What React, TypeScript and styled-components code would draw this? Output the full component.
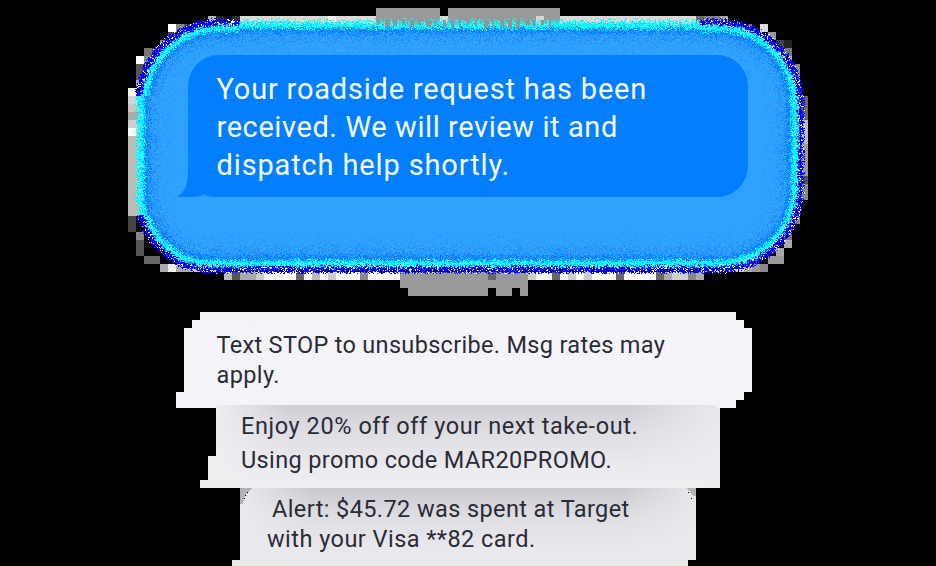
import React from "react";
import styled, { createGlobalStyle } from "styled-components";

const GlobalStyle = createGlobalStyle`
  html, body { margin: 0; background: #000; overflow: hidden; }
`;

const Stage = styled.main`
  position: relative;
  width: 936px;
  height: 566px;
  overflow: hidden;
  background: #000;
  font-family: Roboto, "Open Sans", sans-serif;
`;

const GlowArt = styled.svg`
  position: absolute;
  inset: 0;
  display: block;
`;

const Thread = styled.section`
  position: relative;
  display: flex;
  flex-direction: column;
  padding-top: 55px;
`;

const PrimaryBubble = styled.article`
  position: relative;
  box-sizing: border-box;
  width: 560px;
  height: 142px;
  margin-left: 188px;
  padding: 15px 29px 0 28.5px;
  border-radius: 31px 31px 31px 14px;
  background: #027eff;
  color: #f5fbff;
`;

const Tail = styled.svg`
  position: absolute;
  left: -11px;
  bottom: 0;
`;

const CornerArt = styled.svg<{ $x: number }>`
  position: absolute;
  top: 0;
  left: ${(p) => p.$x}px;
`;

const Card = styled.article<{ $left: number; $w: number; $h: number; $top: number; $pad: string; $fill: string; $clip: string }>`
  position: relative;
  box-sizing: border-box;
  flex: none;
  width: ${(p) => p.$w}px;
  height: ${(p) => p.$h}px;
  margin: ${(p) => p.$top}px 0 0 ${(p) => p.$left}px;
  padding: ${(p) => p.$pad};
  background: ${(p) => p.$fill};
  clip-path: polygon(${(p) => p.$clip});
  color: #2b2b37;
`;

const Line = styled.div<{ $size: number; $lh: number; $ls?: number; $indent?: number }>`
  position: relative;
  font-size: ${(p) => p.$size}px;
  line-height: ${(p) => p.$lh}px;
  letter-spacing: ${(p) => p.$ls ?? 0}px;
  padding-left: ${(p) => p.$indent ?? 0}px;
  white-space: nowrap;
`;

function makeRandom(seed: number) {
  let s = seed;
  return () => {
    s = (s + 0x6d2b79f5) | 0;
    let t = Math.imul(s ^ (s >>> 15), 1 | s);
    t = (t + Math.imul(t ^ (t >>> 7), 61 | t)) ^ t;
    return ((t ^ (t >>> 14)) >>> 0) / 4294967296;
  };
}

const BOX = { l: 136, r: 803, t: 20, b: 272 };

/* Distance inwards from the edge of the glow; negative outside it. */
function depth(x: number, y: number) {
  const left = x < 469;
  const top = y < 146;
  const rad = left && !top ? 75 : 84;
  const dx = left ? BOX.l + rad - x : x - (BOX.r - rad);
  const dy = top ? BOX.t + rad - y : y - (BOX.b - rad);
  if (dx > 0 && dy > 0) return rad - Math.hypot(dx, dy);
  return Math.min(x - BOX.l, BOX.r - x, y - BOX.t, BOX.b - y);
}

function buildSpeckles() {
  const rnd = makeRandom(41);
  const paths: Record<string, string[]> = {};
  const pick = (list: string[]) => list[Math.floor(rnd() * list.length)];
  for (let y = 18; y < 275; y++) {
    let run = "";
    let start = 0;
    for (let x = 134; x <= 808; x++) {
      let color = "";
      const d0 = depth(x + 0.5, y + 0.5);
      if (x < 808 && d0 > -2 && d0 < 44) {
        const d = d0 + (rnd() - 0.5) * 5;
        const topEdge = y < 60 && x > 238 && x < 700;
        const leftEdge = x < 165 && y > 95 && y < 215;
        const rightEdge = x > 780 && y > 95 && y < 197;
        const soft = topEdge || leftEdge;
        const darkEnd = rightEdge ? 5 : 5.5;
        const e = d + (soft ? 3 : 0);
        if (d < -0.5) color = "";
        else if (e < darkEnd) color = soft ? (rnd() < 0.4 ? "#00ffff" : "") : pick(["#0900ff", "#0900ff", "#0900ff", "#0500b4", "#ffffff", "#2330ff", "#0900ff"]);
        else if (e < 11.5) color = pick(["#00ffff", "#00ffff", "#00ffff", "#00ffff", "#12e4ff", "#7affff", "#20b8ff"]);
        else if (e < 17) color = pick(["#0083ff", "#0083ff", "#1b73ee", "#22a5ff", "#3d73ed", "#08a6ff"]);
        else if (e < 25) color = rnd() < 0.75 ? pick(["#2399ff", "#3799f2", "#1489ff", "#2ab0ff", "#318ee8"]) : "";
        else if (rnd() < (44 - e) / 34) color = pick(["#2096ff", "#349af2", "#2ca8ff"]);
      }
      if (color !== run) {
        if (run) (paths[run] ??= []).push(`M${start} ${y}h${x - start}v1H${start}z`);
        run = color;
        start = x;
      }
    }
  }
  return Object.entries(paths).map(([fill, d]) => ({ fill, d: d.join("") }));
}

const speckles = buildSpeckles();

/* x, y, width, height, colour */
type Block = [number, number, number, number, string];
const blocks: Block[] = [
  [208, 16, 8, 8, "#b5b5b0"], [216, 16, 8, 8, "#252525"], [224, 16, 8, 8, "#101010"], [232, 16, 8, 8, "#303030"],
  [240, 16, 456, 16, "#ded9d5"], [328, 16, 8, 8, "#f4f0ef"], [696, 16, 8, 8, "#716a69"], [704, 16, 16, 8, "#828282"], [720, 16, 8, 8, "#a9a9a9"],
  [376, 8, 64, 20, "#999"], [448, 8, 112, 20, "#999"], [536, 16, 8, 8, "#d5d5d5"],
  [192, 24, 16, 8, "#777"], [184, 24, 8, 8, "#555"], [168, 24, 8, 8, "#fff"], [176, 24, 8, 8, "#888"],
  [168, 32, 8, 8, "#444"], [160, 40, 8, 8, "#888"], [152, 48, 8, 8, "#444"], [144, 48, 8, 8, "#777"],
  [136, 56, 8, 8, "#fff"], [144, 56, 8, 8, "#888"], [136, 64, 8, 16, "#555"], [136, 80, 8, 8, "#aaa"],
  [128, 88, 8, 8, "#fff"], [128, 96, 16, 8, "#d7d5d1"], [128, 104, 16, 8, "#c8c7c2"], [128, 112, 16, 8, "#aaa"],
  [128, 120, 16, 8, "#cfcfc9"], [128, 128, 8, 8, "#fff"], [136, 128, 8, 8, "#ccc"], [128, 136, 16, 80, "#bbbcb7"],
  [128, 216, 8, 16, "#444"], [136, 232, 8, 8, "#888"], [136, 240, 8, 16, "#555"], [144, 256, 16, 8, "#666"],
  [160, 264, 8, 8, "#aaa"], [168, 264, 8, 8, "#f0f0f0"], [176, 264, 16, 8, "#aaa"], [192, 264, 24, 8, "#c9c9c9"], [216, 264, 8, 8, "#444"],
  [736, 24, 16, 8, "#777"], [760, 24, 8, 8, "#ddd"], [768, 32, 8, 8, "#999"], [776, 40, 8, 8, "#444"],
  [784, 40, 8, 8, "#222"], [784, 48, 8, 8, "#777"], [784, 56, 8, 8, "#aaa"], [792, 64, 8, 16, "#888"],
  [792, 80, 8, 8, "#ddd"], [792, 88, 8, 8, "#aaa"], [800, 96, 8, 24, "#666"], [800, 120, 8, 24, "#bbb"],
  [800, 144, 8, 32, "#999"], [800, 176, 8, 8, "#555"], [800, 184, 8, 16, "#888"], [792, 200, 8, 8, "#bbb"],
  [792, 208, 8, 8, "#eee"], [792, 216, 8, 8, "#888"], [784, 224, 8, 16, "#777"], [784, 240, 8, 8, "#aaa"],
  [776, 248, 8, 8, "#aaa"], [768, 256, 16, 8, "#999"], [760, 264, 8, 8, "#888"], [744, 264, 8, 8, "#aaa"], [752, 264, 8, 8, "#999"], [704, 264, 40, 8, "#c9c9c9"],
  [224, 272, 8, 8, "#bbb"], [232, 272, 8, 8, "#555"], [240, 272, 16, 8, "#aaa"], [256, 272, 8, 8, "#ccc"],
  [264, 272, 32, 8, "#fff"], [296, 272, 8, 8, "#666"], [304, 272, 8, 8, "#fff"], [312, 272, 8, 8, "#bbb"],
  [320, 272, 8, 8, "#fff"], [328, 272, 8, 8, "#ccc"], [336, 272, 24, 8, "#fff"], [360, 272, 8, 8, "#888"],
  [368, 272, 32, 8, "#fff"], [400, 272, 128, 16, "#999"], [488, 272, 8, 8, "#666"],
  [408, 288, 80, 8, "#999"], [496, 288, 16, 8, "#999"], [520, 288, 8, 8, "#999"],
  [528, 272, 8, 8, "#ccc"], [536, 272, 16, 8, "#fff"], [552, 272, 8, 8, "#666"],
  [560, 272, 8, 8, "#fff"], [568, 272, 8, 8, "#ccc"], [576, 272, 8, 8, "#fff"], [584, 272, 8, 8, "#ccc"],
  [592, 272, 24, 8, "#fff"], [616, 272, 8, 8, "#666"], [624, 272, 32, 8, "#fff"], [656, 272, 8, 8, "#666"],
  [664, 272, 8, 8, "#aaa"], [672, 272, 16, 8, "#d0d0d0"], [688, 272, 8, 8, "#888"], [696, 272, 8, 8, "#aaa"],
];

function Glow() {
  const rnd = makeRandom(7);
  const teeth = Array.from({ length: 22 }, (_, i) => {
    const x = Math.round(377 + i * 8.2);
    const w = 2 + Math.floor(rnd() * 4);
    return `M${x} 20h${w}v${5 + Math.floor(rnd() * 4)}h-${w}z`;
  }).join("");
  return (
    <GlowArt width="936" height="566" viewBox="0 0 936 566" shapeRendering="crispEdges" aria-hidden="true">
      {blocks.map(([x, y, w, h, c]) => (
        <rect key={`${x}-${y}-${w}`} x={x} y={y} width={w} height={h} fill={c} />
      ))}
      <path d="M217 28H721A74 74 0 0 1 795 102V191A74 74 0 0 1 721 265H209A66 66 0 0 1 143 199V102A74 74 0 0 1 217 28Z" fill="#2fa2ff" />
      {speckles.map((s) => (
        <path key={s.fill} d={s.d} fill={s.fill} />
      ))}
      <path d={teeth} fill="#939498" />
    </GlowArt>
  );
}

export default function App() {
  return (
    <>
      <GlobalStyle />
      <Stage>
        <Glow />
        <Thread>
          <PrimaryBubble>
            <Tail width="40" height="24" viewBox="0 0 40 24" aria-hidden="true">
              <path d="M11 0Q11 17 0 24H40V0Z" fill="#027eff" />
              <path d="M14 24Q23 24 27 21Q32 24 39 24Z" fill="#2199ff" />
            </Tail>
            <Line $size={29} $lh={38} $ls={0.8}>Your roadside request has been</Line>
            <Line $size={29} $lh={38} $ls={0.59}>received. We will review it and</Line>
            <Line $size={29} $lh={38} $ls={0.86}>dispatch help shortly.</Line>
          </PrimaryBubble>
          <Card
            $left={176} $w={576} $h={96} $top={115} $pad="18px 0 0 40.5px"
            $fill="linear-gradient(#f3f3f4, #f4f4f9 18%, #f4f4f8)"
            $clip="24px 0, 560px 0, 560px 8px, 568px 8px, 568px 16px, 576px 16px, 576px 80px, 568px 80px, 568px 88px, 560px 88px, 560px 96px, 0 96px, 0 80px, 8px 80px, 8px 16px, 16px 16px, 16px 8px, 24px 8px"
          >
            <Line $size={23.5} $lh={30} $ls={0.32}>Text STOP to unsubscribe. Msg rates may</Line>
            <Line $size={23.5} $lh={30} $ls={0.4}>apply.</Line>
          </Card>
          <Card
            $left={200} $w={520} $h={83} $top={-3} $pad="4px 0 0 41px"
            $fill="linear-gradient(90deg, #eeeef1 16px, transparent 90px, transparent 430px, #ededf0cc 510px), linear-gradient(#cfcfd5, #dedee3 35%, #ebebef 75%, #efeff2)"
            $clip="16px 0, 516px 0, 516px 3px, 520px 3px, 520px 83px, 0 83px, 0 75px, 8px 75px, 8px 51px, 16px 51px"
          >
            <Line $size={23.5} $lh={34} $ls={0.58}>Enjoy 20% off off your next take-out.</Line>
            <Line $size={23.5} $lh={34} $ls={0.37}>Using promo code MAR20PROMO.</Line>
          </Card>
          <Card
            $left={232} $w={464} $h={78} $top={0} $pad="6px 0 0 35px"
            $fill="linear-gradient(90deg, #ebebee 8px, transparent 80px, transparent 390px, #ebebeecc 455px), linear-gradient(#c9c9cf, #dddde2 35%, #e8e8ed 75%, #ebebee)"
            $clip="8px 0, 464px 0, 464px 72px, 456px 72px, 456px 78px, 0 78px, 0 72px, 8px 72px"
          >
            <CornerArt $x={8} width="12" height="16" viewBox="0 0 12 16" shapeRendering="crispEdges" aria-hidden="true">
              <path d="M0 0h12L8 4 4 10 3 16H0z" fill="#b3b3b5" />
              <path d="M7 4h1v1h-1zM5 7h1v1h-1zM4 10h1v1h-1z" fill="#000" />
            </CornerArt>
            <CornerArt $x={452} width="12" height="12" viewBox="0 0 12 12" shapeRendering="crispEdges" aria-hidden="true">
              <path d="M3 0h9v8H9z" fill="#b3b3b5" />
              <path d="M4 4h1v1h-1zM7 10h1v1h-1z" fill="#000" />
            </CornerArt>
            <Line $size={23.5} $lh={30} $ls={0.4} $indent={5}>Alert: $45.72 was spent at Target</Line>
            <Line $size={23.5} $lh={30} $ls={0.46}>with your Visa **82 card.</Line>
          </Card>
        </Thread>
      </Stage>
    </>
  );
}
